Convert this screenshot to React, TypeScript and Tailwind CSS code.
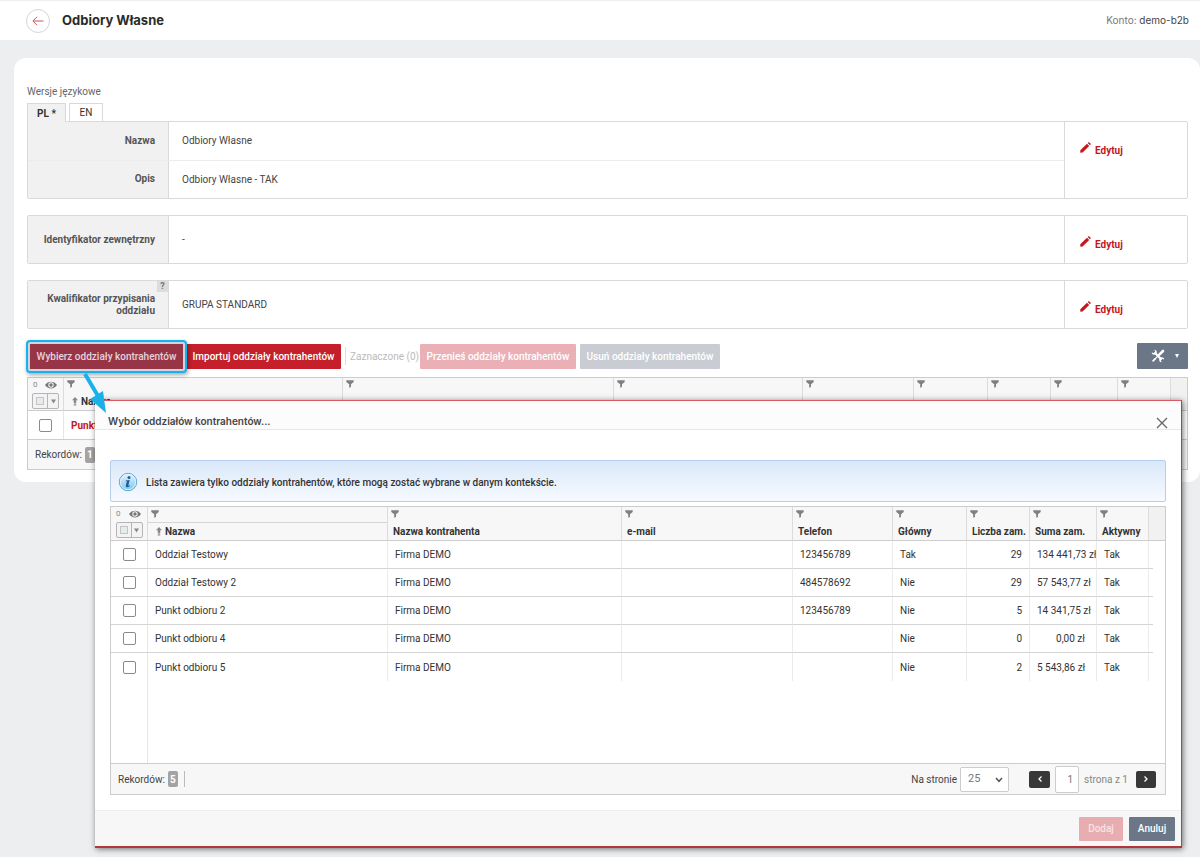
import React from "react";

function Funnel() {
  return (
    <svg viewBox="0 0 8 8" className="h-2 w-2 shrink-0" aria-hidden="true">
      <path d="M0.3 0.3H7.7V2L5 4.2V7L3.2 7.8V4.2L0.3 2Z" fill="#808080" />
    </svg>
  );
}

function Eye() {
  return (
    <svg viewBox="0 0 12 8" className="h-2 w-3" aria-hidden="true">
      <path d="M0 4C2.8-.5 9.2-.5 12 4 9.2 8.500 2.800 8.500 0 4Z" fill="#777" />
      <circle cx="6" cy="4" r="2.700" fill="#f6f6f6" />
      <circle cx="6" cy="4" r="1.700" fill="#777" />
    </svg>
  );
}

function SortUp() {
  return (
    <svg viewBox="0 0 6 9" className="h-[9px] w-1.5 shrink-0" aria-hidden="true">
      <path d="M3 0L6 3.200H4.200V6.500H1.800V3.200H0ZM1.800 7.300H4.200V8.500H1.800Z" fill="#888" />
    </svg>
  );
}

function Pencil() {
  return (
    <svg viewBox="0 0 11 11" className="mb-1.5 h-[11px] w-[11px]" aria-hidden="true">
      <path d="M0.300 8.300L7 1.700 9.200 3.900 2.600 10.500 0.300 10.700ZM7.700 1L8.400.3Q8.900 0 9.300.4L10.500 1.600Q10.900 2 10.600 2.500L9.900 3.200Z" fill="#c4161c" />
    </svg>
  );
}

function Tools() {
  return (
    <svg viewBox="0 0 14 14" className="h-[14px] w-[14px]" aria-hidden="true">
      <path d="M3.800 3.800L10.200 10.200" stroke="#fff" strokeWidth="2" />
      <path d="M3.300 0.800A2.500 2.500 0 1 1 0.800 3.300L2.400 4.300 4.200 2.500Z" fill="#fff" />
      <path d="M10.700 13.200A2.500 2.500 0 1 1 13.200 10.700L11.600 9.700 9.800 11.500Z" fill="#fff" />
      <path d="M12 2L8.300 5.700" stroke="#fff" strokeWidth="2.600" strokeLinecap="round" />
      <path d="M8 6L3 11" stroke="#fff" strokeWidth="1.300" />
      <path d="M3.900 9L5 10.100 2.300 13 1 11.700Z" fill="#fff" />
    </svg>
  );
}

function InfoIcon() {
  return (
    <svg viewBox="0 0 20 20" className="h-5 w-5 shrink-0" aria-hidden="true">
      <defs>
        <linearGradient id="info-fill" x1="0" y1="0" x2="0" y2="1">
          <stop offset="0" stopColor="#e6f4fc" />
          <stop offset="0.500" stopColor="#b3dcf4" />
          <stop offset="1" stopColor="#7cc5ee" />
        </linearGradient>
      </defs>
      <circle cx="10" cy="10" r="8.700" fill="url(#info-fill)" stroke="#5ba8d6" strokeWidth="1" />
      <circle cx="10" cy="10" r="7.700" fill="none" stroke="#e9f6fd" strokeWidth="0.800" />
      <circle cx="11" cy="5.500" r="1.500" fill="#1c5f96" />
      <path d="M7.700 8.400L11.700 8 10.300 13.400Q10.300 14 12 13.200L11.700 14.200Q9.500 15.600 8.200 14.900 7.500 14.400 8 12.800L8.900 9.200 7.600 9.200Z" fill="#1c5f96" />
    </svg>
  );
}

function HeaderTools({ id }: { id: string }) {
  return (
    <div className="flex h-8 flex-col items-center gap-1 pt-[3px]">
      <div className="flex w-full items-center justify-between pr-1.5 pl-[5px]">
        <span className="text-[8px] leading-[8px] font-normal text-[#888]">0</span>
        <Eye />
      </div>
      <div className="flex h-4 w-[27px] rounded-[2px] border border-[#b5b5b5] bg-[#f3f3f3]">
        <label className="flex w-[15px] items-center justify-center border-r border-[#b5b5b5]">
          <input
            id={id}
            type="checkbox"
            aria-label="Zaznacz wszystkie"
            className="h-2 w-2 appearance-none border border-[#c4c4c4] bg-[#e6ebee]"
          />
        </label>
        <button type="button" aria-label="Opcje zaznaczania" className="flex flex-1 items-center justify-center">
          <svg viewBox="0 0 6 5" className="h-[5px] w-[5px]" aria-hidden="true">
            <path d="M0 0H6L3 5Z" fill="#888" />
          </svg>
        </button>
      </div>
    </div>
  );
}

function RowCheck({ label }: { label: string }) {
  return (
    <input
      type="checkbox"
      aria-label={label}
      className="mx-auto block h-[13px] w-[13px] appearance-none rounded-[2px] border border-[#8a8a8a] bg-white"
    />
  );
}

function EditCell() {
  return (
    <div className="flex w-[123px] shrink-0 border-l border-[#d9d9d9] pl-[15px]">
      <a href="#edytuj" className="mt-[21px] flex h-4 items-end gap-1 text-[10px] leading-4 font-bold text-[#c4161c]">
        <Pencil />
        <span>Edytuj</span>
      </a>
    </div>
  );
}

function Field({ label, value, help = false }: { label: string; value: string; help?: boolean }) {
  return (
    <div className="flex flex-1 items-stretch">
      <div className="relative flex w-[141px] shrink-0 items-center justify-end border-r border-[#d9d9d9] bg-[#f1f1f1] pr-[13px] pl-3 text-right text-[10px] leading-3 font-bold text-[#555]">
        {label}
        {help && (
          <button
            type="button"
            aria-label="Pomoc"
            className="absolute top-0 right-0 h-[11px] w-[11px] bg-[#dcdcdc] text-[9px] leading-[11px] font-bold text-[#777]"
          >
            ?
          </button>
        )}
      </div>
      <div className="flex flex-1 items-center pl-[13px] text-[10px] text-[#444]">{value}</div>
    </div>
  );
}

const backColumns = [
  "w-[279px]",
  "",
  "w-[189px]",
  "w-[111px]",
  "w-[74px]",
  "w-[63px]",
  "w-[67px]",
  "w-[53px]",
];

const columns = [
  { name: "Nazwa", width: "w-[240px]" },
  { name: "Nazwa kontrahenta", width: "" },
  { name: "e-mail", width: "w-[171px]" },
  { name: "Telefon", width: "w-[100px]" },
  { name: "Główny", width: "w-[74px]" },
  { name: "Liczba zam.", width: "w-[63px]" },
  { name: "Suma zam.", width: "w-[67px]" },
  { name: "Aktywny", width: "w-[52px]" },
];

const rows = [
  ["Oddział Testowy", "Firma DEMO", "", "123456789", "Tak", "29", "134 441,73 zł", "Tak"],
  ["Oddział Testowy 2", "Firma DEMO", "", "484578692", "Nie", "29", "57 543,77 zł", "Tak"],
  ["Punkt odbioru 2", "Firma DEMO", "", "123456789", "Nie", "5", "14 341,75 zł", "Tak"],
  ["Punkt odbioru 4", "Firma DEMO", "", "", "Nie", "0", "0,00 zł", "Tak"],
  ["Punkt odbioru 5", "Firma DEMO", "", "", "Nie", "2", "5 543,86 zł", "Tak"],
];

const cellAlign = ["", "", "", "", "", "text-right pr-[7px]", "text-right pr-[11px]", ""];

function RecordCount({ count }: { count: number }) {
  return (
    <div className="flex items-center gap-[3px] text-[10px] text-[#444]">
      Rekordów:
      <span className="flex h-4 w-2.5 items-center justify-center rounded-[2px] bg-[#a3a3a3] font-bold text-white">
        {count}
      </span>
    </div>
  );
}

function BranchTable() {
  return (
    <table className="w-full table-fixed border-separate border-spacing-0 text-left text-[10px] text-[#333]">
      <colgroup>
        <col className="w-[37px]" />
        {columns.map((c) => (
          <col key={c.name} className={c.width} />
        ))}
        <col className="w-1" />
        <col className="w-3" />
      </colgroup>
      <thead className="bg-[#f7f7f7]">
        <tr>
          <th className="border-r border-b border-[#dcdcdc] border-b-[#ccc] p-0 align-top">
            <HeaderTools id="select-all-branches" />
          </th>
          {columns.map((c, i) => (
            <th key={c.name} className="border-r border-b border-[#dcdcdc] border-b-[#ccc] p-0 align-top whitespace-nowrap">
              <div className={i === 0 ? "flex h-4 items-start border-b border-[#d5d5d5] pt-[3px] pl-[3px]" : "flex h-4 items-start pt-[3px] pl-[3px]"}>
                <Funnel />
              </div>
              <div className={i === 0 ? "flex h-[17px] items-center gap-[3px] pl-2 font-bold" : "flex h-[17px] items-center pl-[5px] font-bold"}>
                {i === 0 && <SortUp />}
                {c.name}
              </div>
            </th>
          ))}
          <th colSpan={2} className="border-b border-[#ccc] bg-[#f1f1f1] p-0" />
        </tr>
      </thead>
      <tbody>
        {rows.map((row, r) => {
          const line = r < rows.length - 1 ? " border-b border-b-[#d4d4d4]" : "";
          return (
            <tr key={row[0]} className="h-7">
              <td className={"border-r border-[#e6e6e6] p-0" + line}>
                <RowCheck label={row[0]} />
              </td>
              {row.map((cell, i) => (
                <td
                  key={columns[i].name}
                  className={"overflow-hidden border-r border-[#ebebeb] py-0 pl-[7px] whitespace-nowrap " + cellAlign[i] + line}
                >
                  {cell}
                </td>
              ))}
              <td className={"p-0" + line} />
              <td className="p-0" />
            </tr>
          );
        })}
        <tr className="h-[82px]">
          <td className="border-r border-[#e6e6e6] p-0" />
          <td colSpan={10} className="p-0" />
        </tr>
      </tbody>
    </table>
  );
}

function Modal() {
  return (
    <section
      role="dialog"
      aria-labelledby="dialog-title"
      className="absolute top-[400px] right-[18px] left-[95px] z-10 border-t border-r border-b-2 border-t-[#dc5a5f] border-r-[#c33b40] border-b-[#b3343a] bg-white shadow-[1px_1px_6px_rgba(0,0,0,0.55)]"
    >
      <header className="flex h-[29px] items-end justify-between border-b border-[#e8e8e8] bg-[#fcfcfc] pr-[13px] pl-[13px]">
        <h2 id="dialog-title" className="font-[Inter,sans-serif] text-[10px] leading-4 font-semibold text-[#444]">
          Wybór oddziałów kontrahentów...
        </h2>
        <button type="button" aria-label="Zamknij">
          <svg viewBox="0 0 12 12" className="h-3 w-3" aria-hidden="true">
            <path d="M1 1L11 11M11 1L1 11" stroke="#666" strokeWidth="1.300" />
          </svg>
        </button>
      </header>
      <div className="px-[15px] pt-[30px] pb-[15px]">
        <div className="flex h-[42px] items-center gap-2 rounded-[2px] border border-[#b4cfee] bg-linear-to-b from-[#dae8f9] to-[#f7faff] pt-0.5 pl-[7px] text-[10px] font-medium text-[#333]">
          <InfoIcon />
          Lista zawiera tylko oddziały kontrahentów, które mogą zostać wybrane w danym kontekście.
        </div>
        <div className="mt-1 border border-[#ccc]">
          <BranchTable />
          <div className="flex h-[31px] items-center justify-between border-t border-[#ccc] bg-[#f7f7f7] pr-[9px] pl-[7px] text-[10px] text-[#444]">
            <div className="flex items-center gap-[6px]">
              <RecordCount count={5} />
              <span className="h-4 w-px bg-[#bbb]" />
            </div>
            <div className="flex items-center">
              <label htmlFor="page-size">Na stronie</label>
              <div className="relative ml-[3px]">
                <select
                  id="page-size"
                  defaultValue="25"
                  className="h-[25px] w-[49px] appearance-none rounded-[2px] border border-[#ccc] bg-white pl-[7px] text-[11px] text-[#777]"
                >
                  <option>25</option>
                  <option>50</option>
                </select>
                <svg viewBox="0 0 8 6" className="pointer-events-none absolute top-[10px] right-1.5 h-1.5 w-2" aria-hidden="true">
                  <path d="M1 1L4 4.300 7 1" fill="none" stroke="#555" strokeWidth="1.500" />
                </svg>
              </div>
              <button type="button" aria-label="Poprzednia strona" className="ml-5 flex h-[17px] w-[21px] items-center justify-center rounded-[2px] bg-[#383838]">
                <svg viewBox="0 0 4 6" className="h-1.5 w-1" aria-hidden="true">
                  <path d="M3.500 0.500L1 3 3.500 5.500" fill="none" stroke="#fff" strokeWidth="1.300" />
                </svg>
              </button>
              <input
                type="text"
                aria-label="Numer strony"
                defaultValue="1"
                className="ml-[5px] h-[27px] w-6 rounded-[2px] border border-[#ccc] bg-white pr-[5px] text-right text-[10px] text-[#777]"
              />
              <span className="ml-[5px] text-[#888]">strona z 1</span>
              <button type="button" aria-label="Następna strona" className="ml-2 flex h-[17px] w-5 items-center justify-center rounded-[2px] bg-[#383838]">
                <svg viewBox="0 0 4 6" className="h-1.5 w-1" aria-hidden="true">
                  <path d="M0.500 0.500L3 3 0.500 5.500" fill="none" stroke="#fff" strokeWidth="1.300" />
                </svg>
              </button>
            </div>
          </div>
        </div>
      </div>
      <footer className="flex h-9 items-center justify-end gap-1.5 border-t border-[#eee] bg-[#f7f7f7] pr-1.5 text-[10px] font-medium text-white">
        <button type="button" className="h-6 w-[44px] rounded-[1px] bg-[#e7adb1] text-[#f9e3e4]">Dodaj</button>
        <button type="button" className="h-6 w-[46px] rounded-[1px] bg-[#6b7687]">Anuluj</button>
      </footer>
    </section>
  );
}

export default function App() {
  return (
    <div className="relative min-h-screen bg-[#edeef0] font-[Roboto,sans-serif] text-[10px]">
      <header className="flex h-10 items-center justify-between border-t border-[#eee] bg-white pr-[11px] pl-[26px] font-[Inter,sans-serif]">
        <div className="flex items-center gap-3">
          <button type="button" aria-label="Wstecz" className="flex h-6 w-6 items-center justify-center rounded-full border border-[#d5d5d5]">
            <svg viewBox="0 0 12 10" className="h-2.5 w-3" aria-hidden="true">
              <path d="M11.500 5H1M5 0.800L0.900 5 5 9.200" fill="none" stroke="#c8555a" strokeWidth="1" />
            </svg>
          </button>
          <h1 className="text-[13px] font-bold text-[#2b2b2b]">Odbiory Własne</h1>
        </div>
        <p className="text-[10px] text-[#777]">
          Konto: <span className="text-[#444]">demo-b2b</span>
        </p>
      </header>

      <main className="mt-[18px] ml-[14px] rounded-[12px] bg-white pt-[26px] pr-3 pb-3 pl-[13px]">
        <p className="h-[19px] leading-[15px] text-[#666]">Wersje językowe</p>
        <div role="tablist" className="flex gap-[3px]">
          <button role="tab" aria-selected="true" type="button" className="z-10 -mb-px h-[19px] w-[39px] border border-b-0 border-[#d9d9d9] bg-[#f1f1f1] font-bold text-[#333]">
            PL *
          </button>
          <button role="tab" aria-selected="false" type="button" className="h-[18px] w-[34px] border border-b-0 border-[#d9d9d9] bg-white text-[#333]">
            EN
          </button>
        </div>
        <section className="flex h-[78px] rounded-[2px] rounded-tl-none border border-[#d9d9d9]">
          <div className="flex flex-1 flex-col divide-y divide-[#ececec]">
            <Field label="Nazwa" value="Odbiory Własne" />
            <Field label="Opis" value="Odbiory Własne - TAK" />
          </div>
          <EditCell />
        </section>
        <section className="mt-4 flex h-[49px] rounded-[2px] border border-[#d9d9d9]">
          <Field label="Identyfikator zewnętrzny" value="-" />
          <EditCell />
        </section>
        <section className="mt-4 flex h-[49px] rounded-[2px] border border-[#d9d9d9]">
          <Field label="Kwalifikator przypisania oddziału" value="GRUPA STANDARD" help />
          <EditCell />
        </section>

        <div className="mt-[14px] flex h-[26px] items-center font-medium text-white">
          <div className="relative ml-[3px]">
            <button type="button" className="relative z-10 h-[25px] w-[153px] bg-[#973546] text-[#e3d3dc]">
              Wybierz oddziały kontrahentów
            </button>
            <span className="absolute -inset-1 rounded-[4px] border-2 border-[#1cb0ea] bg-[#c3d9e3] shadow-[1px_2px_4px_rgba(0,0,0,0.35)]" />
            <svg viewBox="0 0 26 42" className="pointer-events-none absolute top-[28px] left-[53px] z-20 h-[42px] w-[26px]" aria-hidden="true">
              <path d="M2 2L15 24" stroke="#1cb0ea" strokeWidth="4" />
              <path d="M7 27L20 19 23 41Z" fill="#1cb0ea" />
            </svg>
          </div>
          <button type="button" className="ml-[3px] h-[25px] w-[155px] rounded-[1px] bg-[#c41f2a]">
            Importuj oddziały kontrahentów
          </button>
          <span className="ml-1 h-[18px] w-px bg-[#ddd]" />
          <span className="ml-1 w-[70px] font-normal text-[#bbb]">Zaznaczone (0)</span>
          <button type="button" className="h-[25px] w-[156px] rounded-[1px] bg-[#ebb0b5]">
            Przenieś oddziały kontrahentów
          </button>
          <button type="button" className="ml-1 h-[25px] w-[140px] rounded-[1px] bg-[#c9cdd3]">
            Usuń oddziały kontrahentów
          </button>
          <button type="button" aria-label="Narzędzia" className="ml-auto flex h-[26px] w-[51px] items-center justify-end gap-2.5 rounded-[1px] bg-[#6b7687] pr-[9px]">
            <Tools />
            <svg viewBox="0 0 4 4" className="h-1 w-1" aria-hidden="true">
              <path d="M0 0H4L2 4Z" fill="#fff" />
            </svg>
          </button>
        </div>

        <div className="mt-2 border border-[#ccc]">
          <table className="w-full table-fixed border-separate border-spacing-0 text-left">
            <colgroup>
              <col className="w-9" />
              {backColumns.map((w, i) => (
                <col key={i} className={w} />
              ))}
              <col className="w-4" />
            </colgroup>
            <thead className="bg-[#f7f7f7]">
              <tr>
                <th className="border-r border-b border-[#dcdcdc] border-b-[#ccc] p-0 align-top">
                  <HeaderTools id="select-all" />
                </th>
                {backColumns.map((_, i) => (
                  <th key={i} className="border-r border-b border-[#dcdcdc] border-b-[#ccc] p-0 align-top">
                    <div className="flex h-3.5 items-start pt-[2px] pl-[3px]">
                      <Funnel />
                    </div>
                    {i === 0 && (
                      <div className="flex h-[18px] items-center gap-[3px] pl-2 font-bold text-[#333]">
                        <SortUp />
                        Nazwa
                      </div>
                    )}
                  </th>
                ))}
                <th className="border-b border-[#ccc] bg-[#f1f1f1] p-0" />
              </tr>
            </thead>
            <tbody>
              <tr className="h-7">
                <td className="border-r border-[#e6e6e6] p-0">
                  <RowCheck label="Punkt" />
                </td>
                <td colSpan={9} className="py-0 pl-[7px] font-bold text-[#c4161c]">
                  Punkt
                </td>
              </tr>
            </tbody>
          </table>
          <div className="flex h-[30px] items-center border-t border-[#ccc] bg-[#f7f7f7] pl-[7px]">
            <RecordCount count={1} />
          </div>
        </div>
      </main>

      <Modal />
    </div>
  );
}
